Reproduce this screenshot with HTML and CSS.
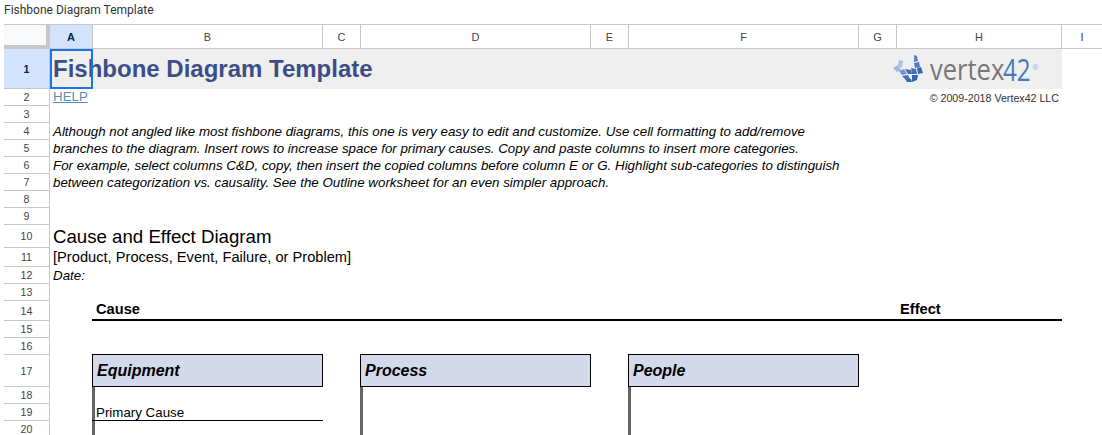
FILE: index.html
```html
<!DOCTYPE html>
<html lang="en">
<head>
    <meta charset="UTF-8">
    <title>Fishbone Diagram Template</title>
    <link rel="stylesheet" href="styles.css">
</head>
<body>
    <div class="doc-title">Fishbone Diagram Template</div>

    <div class="sheet">
        <!-- column headers -->
        <div class="corner"></div>
        <div class="col-head col-active">A</div>
        <div class="col-head">B</div>
        <div class="col-head">C</div>
        <div class="col-head">D</div>
        <div class="col-head">E</div>
        <div class="col-head">F</div>
        <div class="col-head">G</div>
        <div class="col-head">H</div>
        <div class="col-head">I</div>

        <!-- row headers -->
        <div class="row-head row-active r1">1</div>
        <div class="row-head r2">2</div>
        <div class="row-head r3">3</div>
        <div class="row-head r4">4</div>
        <div class="row-head r5">5</div>
        <div class="row-head r6">6</div>
        <div class="row-head r7">7</div>
        <div class="row-head r8">8</div>
        <div class="row-head r9">9</div>
        <div class="row-head r10">10</div>
        <div class="row-head r11">11</div>
        <div class="row-head r12">12</div>
        <div class="row-head r13">13</div>
        <div class="row-head r14">14</div>
        <div class="row-head r15">15</div>
        <div class="row-head r16">16</div>
        <div class="row-head r17">17</div>
        <div class="row-head r18">18</div>
        <div class="row-head r19">19</div>
        <div class="row-head r20">20</div>

        <!-- banner -->
        <div class="banner">
            <span class="banner-title">Fishbone Diagram Template</span>
            <div class="logo">
                <svg class="logo-mark" width="30" height="28" viewBox="0 0 30 28">
                    <polygon points="6,5 10,6 9,13 5,11" fill="#a9c0e3"/>
                    <polygon points="0,13 5,10 8,15 4,17" fill="#9db6de"/>
                    <polygon points="6,16 11,14 14,19 9,20" fill="#6f95cf"/>
                    <polygon points="9,21 15,20 17,24 12,24" fill="#3f6fb8"/>
                    <polygon points="12,14 18,15 19,19 15,19" fill="#3f6fb8"/>
                    <polygon points="12,24 18,24 19,27 14,27" fill="#3568b3"/>
                    <polygon points="21,0 24,1 25,6 21,7" fill="#5d86c5"/>
                    <polygon points="21,8 26,7 27,12 22,13" fill="#4f7cc0"/>
                    <polygon points="18,13 23,14 24,19 19,19" fill="#3f6fb8"/>
                    <polygon points="24,13 28,12 30,18 25,19" fill="#3568b3"/>
                    <polygon points="19,20 25,20 24,25 19,27" fill="#3568b3"/>
                </svg>
                <span class="logo-word">vertex</span><span class="logo-num">42</span><span class="logo-reg">®</span>
            </div>
        </div>

        <div class="cell help-cell"><a class="help" href="#">HELP</a></div>
        <div class="cell copyright">© 2009-2018 Vertex42 LLC</div>

        <div class="cell note n4">Although not angled like most fishbone diagrams, this one is very easy to edit and customize. Use cell formatting to add/remove</div>
        <div class="cell note n5">branches to the diagram. Insert rows to increase space for primary causes. Copy and paste columns to insert more categories.</div>
        <div class="cell note n6">For example, select columns C&amp;D, copy, then insert the copied columns before column E or G. Highlight sub-categories to distinguish</div>
        <div class="cell note n7">between categorization vs. causality. See the Outline worksheet for an even simpler approach.</div>

        <div class="cell heading">Cause and Effect Diagram</div>
        <div class="cell subject">[Product, Process, Event, Failure, or Problem]</div>
        <div class="cell note date">Date:</div>

        <div class="cause-rule"></div>
        <div class="cell axis axis-cause">Cause</div>
        <div class="cell axis axis-effect">Effect</div>

        <div class="cat cat-b">Equipment</div>
        <div class="cat cat-d">Process</div>
        <div class="cat cat-f">People</div>

        <div class="bone bone-b"></div>
        <div class="bone bone-d"></div>
        <div class="bone bone-f"></div>

        <div class="cell primary">Primary Cause</div>

        <div class="selection"></div>
    </div>
</body>
</html>
```

FILE: styles.css
```css
* {
    box-sizing: border-box;
}
html, body {
    margin: 0;
    height: 435px;
    overflow: hidden;
    background: white;
}
body {
    font-family: "Liberation Sans", Arial, sans-serif;
    color: #000;
}
.doc-title {
    height: 24px;
    padding: 3px 0 0 4px;
    font-family: Roboto, "Liberation Sans", sans-serif;
    font-size: 12px;
    line-height: 15px;
    color: #333;
}

/* spreadsheet grid, tracks include the 1px header lines */
.sheet {
    position: relative;
    display: grid;
    margin-left: 4px;
    grid-template-columns: 46px 43px 230px 38px 230px 38px 230px 38px 165px 41px;
    grid-template-rows: 24px 40px 17px 17px 17px 17px 17px 17px 17px 17px 23px 19px 17px 17px 20px 17px 17px 32px 17px 17px 17px;
    border-top: 1px solid #c7c7c7;
}
.corner {
    grid-column: 1;
    grid-row: 1;
    background: #f8f9fa;
    border-right: 4px solid #c7c7c7;
    border-bottom: 4px solid #c7c7c7;
}
.col-head {
    grid-row: 1;
    display: flex;
    align-items: center;
    justify-content: center;
    border-right: 1px solid #c7c7c7;
    border-bottom: 1px solid #c7c7c7;
    font-size: 11px;
    color: #444;
}
.col-active {
    background: #d3e3fd;
    font-weight: bold;
    color: #0b1f44;
}
.row-head {
    grid-column: 1;
    display: flex;
    align-items: center;
    justify-content: center;
    border-right: 1px solid #c7c7c7;
    border-bottom: 1px solid #c7c7c7;
    font-size: 10.67px;
    color: #444;
}
.row-active {
    background: #d3e3fd;
    font-weight: bold;
    color: #0b1f44;
}
.r1 { grid-row: 2; }
.r2 { grid-row: 3; }
.r3 { grid-row: 4; }
.r4 { grid-row: 5; }
.r5 { grid-row: 6; }
.r6 { grid-row: 7; }
.r7 { grid-row: 8; }
.r8 { grid-row: 9; }
.r9 { grid-row: 10; }
.r10 { grid-row: 11; }
.r11 { grid-row: 12; }
.r12 { grid-row: 13; }
.r13 { grid-row: 14; }
.r14 { grid-row: 15; }
.r15 { grid-row: 16; }
.r16 { grid-row: 17; }
.r17 { grid-row: 18; }
.r18 { grid-row: 19; }
.r19 { grid-row: 20; }
.r20 { grid-row: 21; }

.banner {
    grid-column: 2 / 10;
    grid-row: 2;
    display: flex;
    align-items: center;
    justify-content: space-between;
    background: #efefef;
    padding: 0 0 0 3px;
}
.banner-title {
    font-size: 24px;
    font-weight: bold;
    color: #3b4e87;
    white-space: nowrap;
}
.logo {
    display: flex;
    align-items: center;
    width: 169px;
    font-family: "Open Sans", sans-serif;
    white-space: nowrap;
}
.logo-mark {
    margin-right: 7px;
}
.logo-word {
    display: inline-block;
    width: 73px;
    font-size: 30px;
    line-height: 30px;
    color: #777;
    transform: scaleX(0.85);
    transform-origin: left;
}
.logo-num {
    display: inline-block;
    width: 29px;
    font-size: 31px;
    line-height: 30px;
    color: #4a78bd;
    transform: scaleX(0.78);
    transform-origin: left;
}
.logo-reg {
    font-size: 8px;
    color: #9db4d8;
    margin-bottom: 6px;
}

.cell {
    white-space: nowrap;
    padding-left: 3px;
    font-size: 13.33px;
    line-height: 16px;
}
.help-cell {
    grid-column: 2 / 4;
    grid-row: 3;
}
.help {
    color: #5b8db0;
}
.copyright {
    grid-column: 9;
    grid-row: 3;
    padding: 1px 3px 0 0;
    font-size: 10.67px;
    line-height: 16px;
    text-align: right;
    color: #333;
}
.note {
    grid-column: 2 / 8;
    padding-top: 1px;
    font-style: italic;
    line-height: 16px;
}
.n4 { grid-row: 5; }
.n5 { grid-row: 6; }
.n6 { grid-row: 7; }
.n7 { grid-row: 8; }
.heading {
    grid-column: 2 / 6;
    grid-row: 11;
    font-size: 18.67px;
    line-height: 23px;
}
.subject {
    grid-column: 2 / 6;
    grid-row: 12;
    font-size: 14.67px;
    line-height: 19px;
}
.date {
    grid-row: 13;
}
.cause-rule {
    grid-column: 3 / 10;
    grid-row: 15;
    margin-left: -1px;
    border-bottom: 2px solid #000;
}
.axis {
    grid-row: 15;
    font-size: 14.67px;
    font-weight: bold;
    line-height: 16px;
}
.axis-cause {
    grid-column: 3;
}
.axis-effect {
    grid-column: 9;
}
.cat {
    grid-row: 18;
    display: flex;
    align-items: center;
    margin: -1px 0 0 -1px;
    padding-left: 4px;
    background: #d3d8ea;
    border: 1px solid #000;
    font-size: 16px;
    font-weight: bold;
    font-style: italic;
}
.cat-b { grid-column: 3; }
.cat-d { grid-column: 5; }
.cat-f { grid-column: 7; }
.bone {
    grid-row: 19 / 22;
    width: 3px;
    margin-left: -1px;
    background: #666;
}
.bone-b { grid-column: 3; }
.bone-d { grid-column: 5; }
.bone-f { grid-column: 7; }
.primary {
    grid-column: 3;
    grid-row: 20;
    margin-left: -1px;
    padding-left: 4px;
    padding-top: 1px;
    border-bottom: 1px solid #000;
}

/* active cell outline */
.selection {
    grid-column: 2;
    grid-row: 2;
    border: 2px solid #1a73e8;
    pointer-events: none;
}
```
